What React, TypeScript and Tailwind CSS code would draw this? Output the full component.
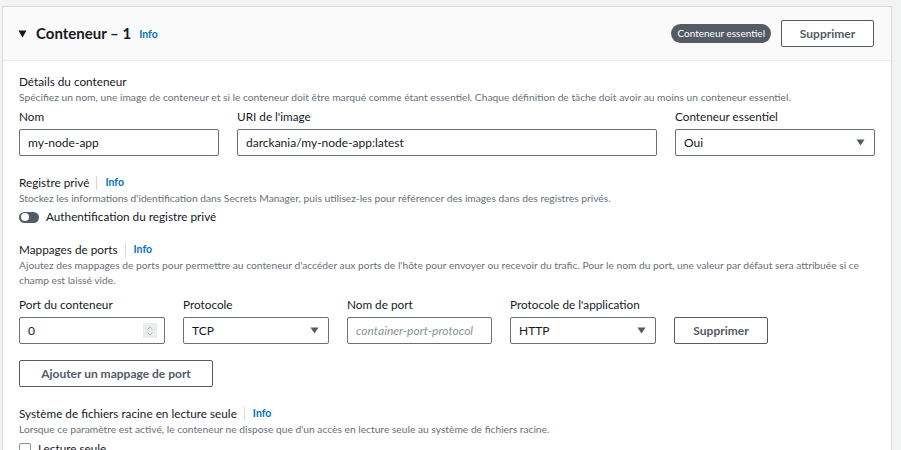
import React from "react";

const font = { fontFamily: 'Lato, "Open Sans", Arial, sans-serif' };

function Caret() {
  return (
    <svg width="9" height="7" viewBox="0 0 9 7" className="shrink-0">
      <path d="M0.5 0.5h8L4.5 6.5z" fill="#545b64" />
    </svg>
  );
}

function Info({ sep = true }: { sep?: boolean }) {
  return (
    <>
      {sep && <span className="ml-[7px] mr-[8px] h-[14px] w-px bg-[#d5dbdb]" />}
      <span className="text-[10.5px] font-bold text-[#0073bb]">Info</span>
    </>
  );
}

function TextInput({ value, italic }: { value: string; italic?: boolean }) {
  return (
    <div
      className={`flex h-[27px] items-center overflow-hidden whitespace-nowrap rounded-[2px] border border-[#687078] px-[8px] text-[12px] ${
        italic ? "italic text-[#879596]" : "text-[#16191f]"
      }`}
    >
      {value}
    </div>
  );
}

function Select({ value }: { value: string }) {
  return (
    <div className="flex h-[27px] items-center justify-between rounded-[2px] border border-[#687078] pl-[8px] pr-[9px] text-[12px] text-[#16191f]">
      <span>{value}</span>
      <Caret />
    </div>
  );
}

function SectionHead({ title, info = true }: { title: string; info?: boolean }) {
  return (
    <div className="flex h-[17px] items-center text-[11.75px] text-[#16191f]">
      <span>{title}</span>
      {info && <Info />}
    </div>
  );
}

function Desc({ children }: { children: React.ReactNode }) {
  return <p className="text-[10.25px] leading-[15px] text-[#687078]">{children}</p>;
}

function Label({ children }: { children: React.ReactNode }) {
  return (
    <div className="mb-[2px] h-[20px] whitespace-nowrap text-[11.75px] leading-[20px] text-[#16191f]">{children}</div>
  );
}

function Button({ children, className }: { children: React.ReactNode; className?: string }) {
  return (
    <button
      className={`h-[27px] rounded-[2px] border border-[#545b64] bg-white text-[12px] font-bold text-[#545b64] ${
        className ?? ""
      }`}
    >
      {children}
    </button>
  );
}

export default function App() {
  return (
    <div style={font} className="min-h-screen bg-[#f2f3f3] pl-[2px] pr-[9px] pt-[6px]">
      <div className="h-[444px] overflow-hidden border border-b-0 border-[#d5dbdb] bg-white">
        {/* Header */}
        <div className="flex h-[54px] items-center justify-between border-b border-[#eaeded] bg-[#fafafa] pl-[15px] pr-[17px]">
          <div className="flex items-center">
            <svg width="9" height="8" viewBox="0 0 9 8" className="mr-[9px]">
              <path d="M0.5 0.5h8L4.5 7.5z" fill="#16191f" />
            </svg>
            <span className="text-[15px] font-bold text-[#16191f]">Conteneur – 1</span>
            <span className="ml-[8px] mt-[2px] text-[10.5px] font-bold text-[#0073bb]">Info</span>
          </div>
          <div className="flex items-center gap-[10px]">
            <span className="rounded-full bg-[#545b64] px-[6px] py-[2px] text-[10px] text-white">
              Conteneur essentiel
            </span>
            <Button className="w-[93px]">Supprimer</Button>
          </div>
        </div>

        {/* Body */}
        <div className="px-[16px] pt-[12px]">
          <SectionHead title="Détails du conteneur" info={false} />
          <Desc>
            Spécifiez un nom, une image de conteneur et si le conteneur doit être marqué comme étant essentiel. Chaque
            définition de tâche doit avoir au moins un conteneur essentiel.
          </Desc>
          <div className="mt-[2px] grid grid-cols-[200px_1fr_200px] gap-[18px]">
            <div>
              <Label>Nom</Label>
              <TextInput value="my-node-app" />
            </div>
            <div>
              <Label>URI de l'image</Label>
              <TextInput value="darckania/my-node-app:latest" />
            </div>
            <div>
              <Label>Conteneur essentiel</Label>
              <Select value="Oui" />
            </div>
          </div>

          <div className="mt-[18px]">
            <SectionHead title="Registre privé" />
            <Desc>
              Stockez les informations d'identification dans Secrets Manager, puis utilisez-les pour référencer des
              images dans des registres privés.
            </Desc>
            <div className="mt-[1px] flex h-[20px] items-center text-[11.75px] text-[#16191f]">
              <span className="mr-[7px] flex h-[11px] w-[20px] items-center rounded-full bg-[#545b64] pl-[1.5px]">
                <span className="h-[8px] w-[8px] rounded-full bg-white" />
              </span>
              Authentification du registre privé
            </div>
          </div>

          <div className="mt-[14px]">
            <SectionHead title="Mappages de ports" />
            <Desc>
              Ajoutez des mappages de ports pour permettre au conteneur d'accéder aux ports de l'hôte pour envoyer ou
              recevoir du trafic. Pour le nom du port, une valeur par défaut sera attribuée si ce champ est laissé
              vide.
            </Desc>
            <div className="mt-[7px] flex items-end gap-[18px]">
              <div className="w-[146px]">
                <Label>Port du conteneur</Label>
                <div className="flex h-[27px] items-center justify-between rounded-[2px] border border-[#687078] pl-[8px] pr-[7px] text-[12px] text-[#16191f]">
                  <span>0</span>
                  <span className="flex h-[15px] w-[14px] items-center justify-center bg-[#eaeded]">
                    <svg width="8" height="12" viewBox="0 0 8 12">
                      <path d="M1.5 4.5L4 2l2.5 2.5M1.5 7.5L4 10l2.5-2.5" fill="none" stroke="#aab7b8" strokeWidth="1" />
                    </svg>
                  </span>
                </div>
              </div>
              <div className="w-[146px]">
                <Label>Protocole</Label>
                <Select value="TCP" />
              </div>
              <div className="w-[145px]">
                <Label>Nom de port</Label>
                <TextInput value="container-port-protocol" italic />
              </div>
              <div className="w-[146px]">
                <Label>Protocole de l'application</Label>
                <Select value="HTTP" />
              </div>
              <Button className="w-[94px]">Supprimer</Button>
            </div>
            <Button className="mt-[16px] w-[194px] text-[12.5px]">Ajouter un mappage de port</Button>
          </div>

          <div className="mt-[18px]">
            <SectionHead title="Système de fichiers racine en lecture seule" />
            <Desc>
              Lorsque ce paramètre est activé, le conteneur ne dispose que d'un accès en lecture seule au système de
              fichiers racine.
            </Desc>
            <div className="mt-[2px] flex h-[20px] items-center text-[11.75px] text-[#16191f]">
              <span className="mr-[7px] h-[12px] w-[12px] rounded-[2px] border border-[#879596]" />
              Lecture seule
            </div>
          </div>
        </div>
      </div>
    </div>
  );
}
